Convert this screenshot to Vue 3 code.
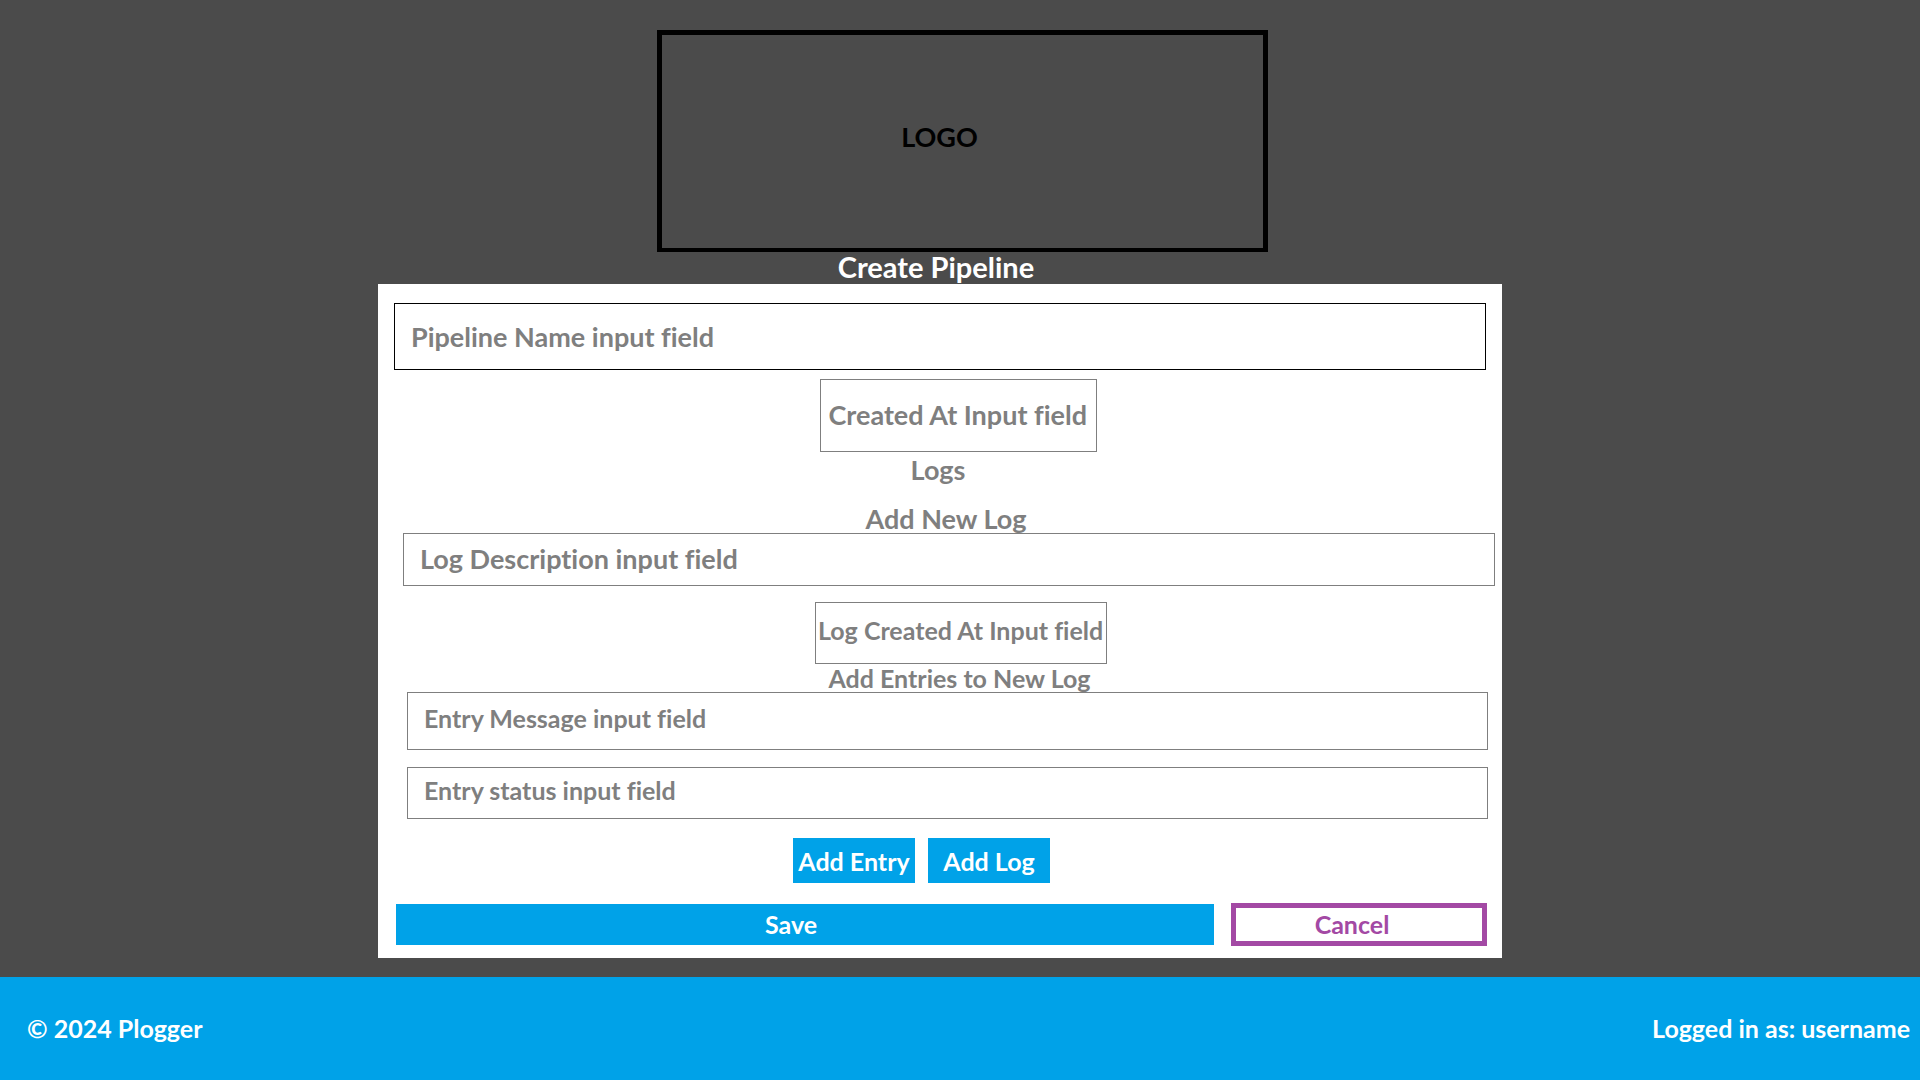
<script setup>
import { ref } from 'vue'

const pipelineName = ref('')
const createdAt = ref('')
const logDescription = ref('')
const logCreatedAt = ref('')
const entryMessage = ref('')
const entryStatus = ref('')
</script>

<template>
  <div class="page">
    <header class="header">
      <div class="logo">LOGO</div>
    </header>

    <main class="main">
      <h1 class="title">Create Pipeline</h1>

      <form class="card" @submit.prevent>
        <input v-model="pipelineName" class="field field-name" type="text" aria-label="Pipeline Name" placeholder="Pipeline Name input field" />
        <div class="row row-created">
          <input v-model="createdAt" class="field field-created" type="text" aria-label="Created At" placeholder="Created At Input field" />
        </div>
        <h2 class="heading heading-logs">Logs</h2>

        <section class="log">
          <h3 class="heading heading-new">Add New Log</h3>
          <input v-model="logDescription" class="field field-description" type="text" aria-label="Log Description" placeholder="Log Description input field" />
          <div class="row row-log-created">
            <input v-model="logCreatedAt" class="field small field-log-created" type="text" aria-label="Log Created At" placeholder="Log Created At Input field" />
          </div>
        </section>

        <section class="entries">
          <h3 class="heading small heading-entries">Add Entries to New Log</h3>
          <input v-model="entryMessage" class="field small field-message" type="text" aria-label="Entry Message" placeholder="Entry Message input field" />
          <input v-model="entryStatus" class="field small field-status" type="text" aria-label="Entry status" placeholder="Entry status input field" />
        </section>

        <div class="row row-add">
          <button class="button button-add" type="button">Add Entry</button>
          <button class="button button-add" type="button">Add Log</button>
        </div>
        <div class="actions">
          <button class="button button-save" type="submit">Save</button>
          <button class="button button-cancel" type="button">Cancel</button>
        </div>
      </form>
    </main>

    <footer class="footer">
      <span>© 2024 Plogger</span>
      <span>Logged in as: username</span>
    </footer>
  </div>
</template>

<style>
body {
  margin: 0;
  background: #4b4b4b;
}
</style>

<style scoped>
.page {
  display: flex;
  flex-direction: column;
  min-height: 100vh;
  font-family: Lato, "Open Sans", sans-serif;
  font-weight: 700;
  font-variant-ligatures: none;
  background: #4b4b4b;
}

.page * {
  box-sizing: border-box;
}

.header {
  display: flex;
  justify-content: center;
  padding: 30px 0 0 5px;
}

.logo {
  display: flex;
  align-items: center;
  justify-content: center;
  width: 611px;
  height: 222px;
  padding: 0 46px 10px 0;
  border: 5px solid #000;
  border-bottom-width: 4px;
  color: #000;
  font-size: 27px;
}

.main {
  display: flex;
  flex-direction: column;
  align-items: center;
  padding-right: 40px;
}

.title {
  margin: 0 0 2px;
  padding-right: 8px;
  color: #fff;
  font-size: 29px;
  line-height: 30px;
}

.card {
  display: flex;
  flex-direction: column;
  width: 100%;
  max-width: 1124px;
  padding: 19px 16px 12px;
  background: #fff;
}

.field {
  width: 100%;
  margin: 0;
  padding: 0 16px;
  border: 1px solid #7f7f7f;
  border-radius: 0;
  background: #fff;
  color: #7f7f7f;
  font-family: inherit;
  font-size: 27px;
  font-variant-ligatures: none;
  font-weight: 700;
}

.field::placeholder {
  color: #7f7f7f;
  opacity: 1;
}

.field.small {
  padding-bottom: 6px;
  font-size: 25px;
}

.field-name {
  height: 67px;
  border-color: #000;
}

.row {
  display: flex;
  justify-content: center;
}

.row-created {
  padding: 9px 0 0 36px;
}

.field-created {
  width: 277px;
  height: 73px;
  padding: 0 0 2px 8px;
}

.heading {
  margin: 0;
  color: #7f7f7f;
  font-size: 27px;
  line-height: 28px;
  text-align: center;
}

.heading.small {
  font-size: 25px;
}

.heading-logs {
  padding: 4px 4px 0 0;
}

.log {
  margin: 21px -9px 0 9px;
}

.heading-new {
  padding-right: 6px;
}

.field-description {
  display: block;
  position: relative;
  height: 53px;
  padding-bottom: 2px;
}

.row-log-created {
  padding: 16px 0 0 24px;
}

.field-log-created {
  width: 292px;
  height: 62px;
  padding: 0 0 0 2px;
}

.entries {
  display: flex;
  flex-direction: column;
  margin: 0 -2px 0 13px;
}

.heading-entries {
  padding-left: 24px;
}

.field-message {
  position: relative;
  height: 58px;
}

.field-status {
  height: 52px;
  margin-top: 17px;
}

.row-add {
  gap: 13px;
  padding: 19px 37px 0 0;
}

.button {
  margin: 0;
  padding: 0;
  border: 0;
  border-radius: 0;
  background: #00a2e8;
  color: #fff;
  font-family: inherit;
  font-size: 25px;
  font-variant-ligatures: none;
  font-weight: 700;
}

.button-add {
  width: 122px;
  height: 45px;
}

.actions {
  display: flex;
  align-items: center;
  gap: 17px;
  margin: 20px -1px 0 2px;
}

.button-save {
  flex: 1;
  height: 41px;
  padding: 0 28px 2px 0;
}

.button-cancel {
  width: 256px;
  height: 43px;
  padding: 0 14px 2px 0;
  border: 5px solid #a349a4;
  background: #fff;
  color: #a349a4;
  line-height: 30px;
}

.footer {
  display: flex;
  flex: 1;
  align-items: center;
  justify-content: space-between;
  margin-top: 19px;
  padding: 0 10px 2px 27px;
  background: #00a2e8;
  color: #fff;
  font-size: 25px;
}
</style>
